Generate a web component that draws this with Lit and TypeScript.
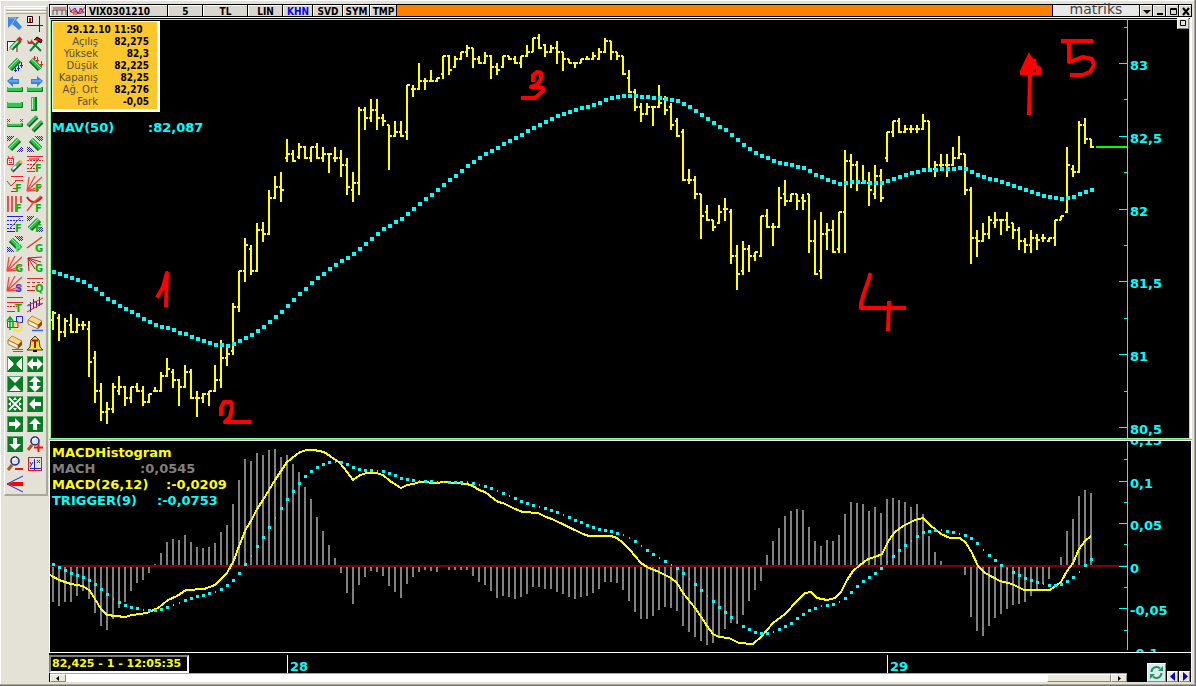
import { LitElement, html, svg, css } from "lit";
import { customElement, property } from "lit/decorators.js";

/* ---------- series: one entry per 5-minute bar, in plot units ---------- */
const STEP = 6;
const X0 = 53;

// high, low, open, close
const BARS: number[][] = `311,330,320,313 314,341,318,332 318,337,332,321 314,333,325,332 318,333,332,325 321,330,325,325
321,377,329,362 351,403,358,391 383,421,391,412 402,424,412,409 383,413,409,387 376,395,391,387 386,406,387,398 387,403,398,387
383,392,387,391 386,406,391,402 394,403,402,394 387,392,391,391 372,392,391,376 358,377,376,369 369,388,372,380 379,406,380,387
365,388,387,372 369,399,372,398 391,417,398,398 393,403,398,394 391,406,394,391 365,392,391,380 340,388,380,358 347,366,358,354
303,355,351,307 271,312,307,271 238,282,271,245 245,275,249,271 223,272,271,230 222,242,230,234 190,235,234,198 176,199,198,187
172,202,187,190 139,162,158,154 150,162,154,161 143,159,157,147 146,159,147,158 147,162,158,147 143,159,147,158 147,162,158,154
153,173,154,154 147,162,158,158 150,177,158,165 158,195,165,187 172,202,190,183 107,195,183,110 107,130,110,118 99,122,118,110
99,130,110,118 114,126,118,121 125,170,125,136 121,137,136,132 121,137,132,136 85,140,132,85 85,97,89,89 63,90,89,81
78,90,81,81 70,82,81,81 78,82,81,78 56,79,74,56 55,75,56,70 56,68,67,59 52,60,59,52 45,57,52,48 48,68,48,59 56,64,59,63
52,64,63,56 55,79,56,67 63,75,67,70 56,68,67,56 56,60,56,59 56,64,59,63 56,68,63,56 45,57,56,52 38,52,52,38 34,49,38,48
44,57,45,52 45,53,52,48 41,64,48,52 52,71,52,59 59,63,59,63 62,68,63,63 59,63,63,59 56,60,59,59 52,60,59,56 48,60,59,52
38,53,52,41 41,60,41,52 52,60,52,56 56,75,56,74 70,93,78,92 89,111,92,107 103,122,107,114 103,115,114,107 107,126,107,107
85,108,107,103 96,115,99,110 103,130,107,125 118,137,121,136 129,181,132,180 169,184,180,180 176,199,180,194 194,239,194,216
205,221,212,220 220,231,220,227 205,224,223,212 198,221,209,209 209,264,212,256 245,290,256,274 241,275,271,249 245,272,249,256
252,261,256,252 216,257,256,216 209,228,216,227 223,246,227,227 187,228,227,198 180,206,194,201 194,202,201,194 194,210,194,201
194,210,198,201 194,253,194,241 220,275,241,274 212,279,271,234 223,250,234,230 220,253,230,252 212,253,249,212 150,253,212,161
154,188,161,165 161,191,165,182 165,184,183,183 172,206,183,190 165,199,194,176 169,202,176,198 132,162,158,132 121,137,132,121
118,133,121,132 125,133,132,129 125,133,129,129 125,133,129,129 114,130,129,121 121,170,121,170 161,177,169,165 154,169,165,165
154,177,165,165 147,166,165,158 136,159,158,154 154,195,154,190 187,264,190,238 230,257,238,241 223,242,241,234 216,239,234,220
212,228,223,220 220,235,220,220 212,231,220,227 223,239,223,230 227,250,230,241 238,253,241,245 230,253,245,238 234,250,238,240
234,242,238,238 238,242,241,238 220,246,238,220 216,220,220,216 147,213,212,165 165,177,169,172 121,173,172,125 118,144,125,139
139,148,139,147`.split(/\s+/).map((r) => r.split(",").map(Number));

const MAV = [272,274,276,278,280,282,286,289,294,299,302,306,309,312,315,319,322,325,327,328,330,333,334,337,339,341,343,345,345,346,
344,341,338,335,331,327,322,317,312,306,300,294,289,283,278,274,269,265,261,258,254,249,244,239,234,
229,226,222,219,214,209,204,199,195,190,185,180,176,171,166,162,158,154,151,148,144,141,138,135,131,128,125,122,119,116,114,112,
110,108,107,105,103,100,98,97,96,96,96,97,97,98,98,99,100,101,104,107,111,115,119,123,127,130,135,140,145,149,153,156,158,161,163,
164,165,167,168,171,175,177,180,182,184,183,182,182,
182,183,183,183,181,179,177,175,173,172,170,170,170,169,169,169,168,169,172,175,177,179,180,182,184,186,188,190,192,194,196,197,198,199,198,197,194,192,190];

const HIST = [602,606,602,602,596,591,599,613,626,630,619,608,602,591,583,580,573,564,553,542,539,540,535,542,547,548,547,543,532,525,
504,480,459,461,453,455,450,449,457,455,464,472,487,499,517,531,545,558,573,593,604,585,577,571,572,576,586,592,598,584,577,572,570,571,572,
567,570,570,570,570,576,582,585,591,598,596,597,599,597,594,587,587,589,589,592,594,597,599,597,596,593,589,582,582,583,590,601,612,
619,619,616,610,607,608,611,626,632,637,641,645,643,638,629,623,624,615,601,590,581,555,541,528,516,511,509,510,527,541,546,540,541,535,
514,502,503,504,511,507,513,499,498,500,502,507,504,514,536,552,561,567,567,567,575,617,631,636,626,618,614,609,605,604,602,596,590,584,579,
567,557,531,519,496,490,493];

const MACD = "50,575 59,580 71,584 83,586 90,591 95,599 101,609 107,615 125,617 132,615 147,613 158,608 168,600 177,596 186,590 204,589 215,585 227,573 234,560 239,546 246,529 251,521 257,509 263,500 275,480 287,462 300,452 307,450 314,450 324,452 330,456 340,463 347,472 353,480 360,475 367,473 376,473 383,475 390,481 401,488 407,485 413,484 420,482 437,483 443,482 467,484 473,486 479,490 485,492 498,502 503,503 515,509 523,512 538,513 546,517 552,519 583,534 589,536 611,536 617,538 623,543 630,550 641,563 647,567 659,572 671,578 677,583 683,593 695,608 700,615 707,626 713,634 719,637 729,638 739,643 753,644 761,637 773,623 785,614 797,601 805,593 811,592 817,598 827,600 835,598 841,592 847,580 853,571 860,565 868,559 875,557 882,554 889,540 895,532 903,526 915,520 923,518 930,525 941,534 950,538 960,538 966,543 972,553 978,566 985,573 1000,581 1012,584 1024,590 1050,590 1061,582 1067,571 1073,563 1079,549 1085,541 1091,536";

const TRIGGER = [564,567,570,573,575,577,580,584,589,594,599,602,605,607,608,610,610,610,609,607,605,603,600,598,596,595,593,592,589,585,
580,573,564,556,546,537,527,518,508,499,491,483,476,471,467,464,462,462,462,464,467,469,470,470,471,471,473,475,478,479,480,481,481,481,482,482,
482,482,482,482,483,485,486,488,491,493,496,498,501,503,505,507,508,510,512,515,517,520,522,525,527,529,530,531,533,535,538,541,546,550,554,558,
561,565,568,573,579,584,590,596,601,607,612,617,622,626,629,632,633,633,632,629,626,623,618,614,610,608,606,605,604,602,598,592,586,581,577,573,
568,562,556,550,545,541,536,532,531,530,530,531,532,534,535,538,543,550,555,560,565,569,572,575,578,580,582,584,585,585,584,581,577,572,565,559];

const TRIGGER_SMALL = new Set([10,15,20,21,27,33,37,47,54,61,64,65,69,71,74,76,81,85,95,96,98,101,103,106,109,114,120,128,131,139,143,148,151,155,159,165,171]);

/* ---------- toolbar glyphs, 16 x 16 ---------- */
const fan = svg`<path d="M0 15 15 10M0 15 15 1M0 15 8 0M0 15 2 1M0 15 12 14" stroke="#f44" stroke-width="1.3"/>`;
const letter = (t: string, c = "#00b400") => svg`<text x="8" y="16" fill=${c} class="ltr">${t}</text>`;
const barUp = svg`<path d="M3 13 12 4" stroke="#046a14" stroke-width="6"/><path d="M2.500 12.500 11.500 3.500" stroke="#2ec24a" stroke-width="4"/><path d="M2 12 11 3" stroke="#a6f0ae" stroke-width="1"/>`;
const barDown = svg`<path d="M4 4 13 13" stroke="#046a14" stroke-width="6"/><path d="M4.500 3.500 13.500 12.500" stroke="#2ec24a" stroke-width="4"/><path d="M5 3 14 12" stroke="#a6f0ae" stroke-width="1"/>`;
const dotsUp = svg`<path d="M0 .5H8M0 2.500H6M0 4.500H4M10 15.500H16M12 13.500H16M14 11.500H16" stroke="#22a" stroke-dasharray="1 1"/><path d="M1 1.500H7M1 3.500H5M11 14.500H16M13 12.500H16" stroke="#22a" stroke-dasharray="1 1"/>`;
const dotsDown = svg`<path d="M8 .5H16M10 2.500H16M12 4.500H16M0 15.500H7M0 13.500H5M0 11.500H3" stroke="#22a" stroke-dasharray="1 1"/><path d="M9 1.500H16M11 3.500H16M1 14.500H6M1 12.500H4" stroke="#22a" stroke-dasharray="1 1"/>`;
const barFlat = (y: number, h = 5) => svg`<rect x="0" y=${y} width="16" height=${h} rx="1" fill="#087a1c"/><rect x="0" y=${y} width="15" height=${h - 1} rx="1" fill="#36c452"/><rect x="1" y=${y} width="13" height="1" fill="#a6f0ae"/>`;
const pencil = svg`<path d="M4 13 13 4" stroke="#0a7a30" stroke-width="5"/><path d="M4 12 12 4" stroke="#a8eeb0" stroke-width="2"/><path d="M11 5 14 2" stroke="#d22" stroke-width="4"/><path d="M1 15 3 11 6 13Z" fill="#da8"/>`;
const tile = (d: unknown) => svg`<rect width="16" height="16" rx="1" fill="#087c22"/><path d="M.5 15V.5H15" stroke="#4bb262"/>${d}`;
const eraserBody = svg`<path d="M1 4 5 0 15 5 11 9Z" fill="#fbd98a" stroke="#c98a1b"/><path d="M1 4 11 9V13L1 8Z" fill="#f5f1e8" stroke="#b5772a"/><path d="M11 9 15 5V9L11 13Z" fill="#8a4a12"/>`;
const lens = svg`<circle cx="8" cy="5" r="4" fill="#cfe4ff" stroke="#226" stroke-width="1.500"/><path d="M6 4 9 2" stroke="#fff" stroke-width="2"/><path d="M5 9 1 14" stroke="#a55a1e" stroke-width="3"/>`;

const TOOLS: [string, unknown][] = [
  ["Select", svg`<path d="M1 1H12L9 4 15 11 12 14 5 8 1 12Z" fill="#3c86e8"/><path d="M2 2H9L4 9" stroke="#8fc0ff"/>`],
  ["Crosshair", svg`<path d="M12.500 0V16M0 9.500H16" stroke="#1414c8"/><path d="M.5 .5H5.500V6.500H.5Z" stroke="#200" fill="#fff"/><path d="M3 2V6" stroke="#e00" stroke-width="2"/>`],
  ["Draw", svg`<path d="M0 5.500H10V16M.5 5V15" stroke="#900"/><rect x="1" y="6" width="8" height="9" fill="#fff"/>${pencil}`],
  ["Settings", svg`<path d="M3 15 12 5M14 15 5 6" stroke="#083" stroke-width="2"/><path d="M7 4 10 1 15 4 14 7 11 5" fill="#b11" stroke="#300"/><path d="M0 4 3 6 5 3 6 8 1 8Z" fill="#e22"/>`],
  ["Rising channel", svg`${barUp}<path d="M8.500 12V16M11.500 9V15M14.500 6V12M7 14.500H10M10 12.500H13M13 9.500H16" stroke="#22d"/>`],
  ["Falling channel", svg`${barDown}<path d="M7.500 0V4M10.500 1V6M14.500 5V11M6 2.500H9M9 4.500H12M13 8.500H16" stroke="#e22"/>`],
  ["Extend left", svg`${barFlat(11, 5)}<path d="M0 5 6 0V3H12V8H6V11Z" fill="#3584e4"/><path d="M2 5H11" stroke="#8cc4ff"/>`],
  ["Extend right", svg`${barFlat(11, 5)}<path d="M16 5 10 0V3H4V8H10V11Z" fill="#3584e4"/><path d="M5 5H14" stroke="#8cc4ff"/>`],
  ["Horizontal line", barFlat(6, 6)],
  ["Vertical line", svg`<rect x="4" y="1" width="6" height="14" fill="#087a1c"/><rect x="4" y="1" width="4" height="13" fill="#36c452"/><rect x="5" y="2" width="1" height="11" fill="#b6f5be"/>`],
  ["Segment", svg`${barFlat(7, 4)}<path d="M0 3 3 6M3 3 0 6M13 3 16 6M16 3 13 6" stroke="#e22"/>`],
  ["Parallel lines", svg`<path d="M1 10 10 1M6 15 15 6" stroke="#046a14" stroke-width="4"/><path d="M1 9 10 0M6 14 15 5" stroke="#3cc858" stroke-width="2"/>`],
  ["Up band", svg`${dotsUp}${barUp}`],
  ["Down band", svg`${dotsDown}${barDown}`],
  ["Robot", svg`<path d="M.5 2.500H6.500V8.500H.5ZM2 2 1 0M5 2 6 0M2 4.500H3M4 4.500H5M2 6.500H5" stroke="#e22"/><path d="M5 15 14 6" stroke="#445" stroke-width="4"/><path d="M5 14 13 6" stroke="#4ccf5c" stroke-width="2"/><path d="M6 13 9 10" stroke="#dff" stroke-width="2"/><path d="M13 7 15 5" stroke="#fb3" stroke-width="3"/>`],
  ["Fibonacci zigzag", svg`<path d="M0 .5H16M0 15.500H8" stroke="#e22"/><path d="M0 4.500H16M0 8.500H8M0 12.500H8" stroke="#e22" stroke-dasharray="2 1"/><path d="M2 3H12L4 12" stroke="#c11"/>${letter("F")}`],
  ["Fibonacci levels", svg`<path d="M4 .5H16M8 4.500H16M6 12.500H9M4 15.500H9M0 5 4 10 10 4" stroke="#e22"/>${letter("F")}`],
  ["Fibonacci fan", svg`${fan}${letter("F")}`],
  ["Fibonacci time", svg`<path d="M1 0V16M5 0V16M9 0V16M14 0V7" stroke="#e22" stroke-width="1.500"/>${letter("F")}`],
  ["Fibonacci arc", svg`<path d="M0 1Q6 11 15 1" stroke="#d11" stroke-width="2"/><path d="M14 0 6 7 0 15" stroke="#f44" stroke-width="1.500"/>${letter("F")}`],
  ["Fibonacci extension", svg`<path d="M0 .5H16M0 15.500H8" stroke="#22d"/><path d="M0 4.500H16M0 8.500H8M0 12.500H8" stroke="#22d" stroke-dasharray="2 1"/><path d="M13 2 3 12" stroke="#e22"/>${letter("F")}`],
  ["Fibonacci up band", svg`${dotsUp}${barUp}${letter("F")}`],
  ["Fibonacci down band", svg`${dotsDown}${barDown}${letter("F", "#4fe070")}`],
  ["Gann line", svg`<path d="M0 12 15 1" stroke="#e33" stroke-width="1.500"/>${letter("G")}`],
  ["Gann fan", svg`${fan}${letter("G")}`],
  ["Gann rays", svg`<path d="M1 2 15 1M1 2 14 6M1 2 8 13M1 2 2 15M1 2 11 9" stroke="#c11"/>${letter("G")}`],
  ["Speed fan", svg`${fan}${letter("S", "#34d")}`],
  ["Quadrant lines", svg`<path d="M0 2.500H16M0 14.500H8" stroke="#e22"/><path d="M0 6.500H16M0 10.500H8" stroke="#e22" stroke-dasharray="3 2"/>${letter("Q")}`],
  ["Tirone levels", svg`<path d="M0 1.500H16M0 6.500H16M0 15.500H8" stroke="#e22"/><path d="M0 10.500H10" stroke="#e22" stroke-dasharray="2 1"/>${letter("T")}`],
  ["Regression", svg`<path d="M3.500 6V16M6.500 3V13M9.500 5V12M12.500 1V10M1 9H4M7 6H9M10 8H15" stroke="#22b"/><path d="M0 10 16 2M0 16 16 7" stroke="#e22"/>`],
  ["Shapes", svg`<path d="M9.500 .5H15.500V6.500H9.500Z" stroke="#22e"/><circle cx="11" cy="11" r="4" stroke="#fd2" stroke-width="1.500"/><path d="M.5 5.500H11V11.500H.5Z" stroke="#e11"/><path d="M3 14V2M0 5 3 1 6 5M6 12V5" stroke="#0a2" stroke-width="1.500"/>`],
  ["Erase", svg`${eraserBody}<path d="M5 14.500H16" stroke="#36f" stroke-width="1.500"/>`],
  ["Erase all", svg`${eraserBody}<path d="M5 13.500H16M6 15.500H16" stroke="#36f"/>`],
  ["Alarm", svg`<path d="M8 0 10 2 12 4 13 11 16 14H0L3 11 4 4 6 2Z" fill="#f4e23c" stroke="#431"/><path d="M6 15H10" stroke="#300" stroke-width="2"/><path d="M5 4.500H11M8 4V12" stroke="#b11" stroke-width="2"/>`],
  ["Narrow", tile(svg`<path d="M1 2 7 8 1 14ZM15 2 9 8 15 14Z" fill="#fff"/><path d="M1 2 6 7M15 2 10 7M1 14 6 9M15 14 10 9" stroke="#dfd"/>`)],
  ["Widen", tile(svg`<path d="M0 8 6 2V6H10V2L16 8 10 14V10H6V14Z" fill="#fff"/>`)],
  ["Flatten", tile(svg`<path d="M2 1H14L8 7ZM2 15H14L8 9Z" fill="#fff"/>`)],
  ["Heighten", tile(svg`<path d="M8 0 14 6H10V10H14L8 16 2 10H6V6H2Z" fill="#fff"/>`)],
  ["Fit", tile(svg`<path d="M2 2 14 14M14 2 2 14" stroke="#fff" stroke-width="2"/><path d="M8 1 10 4H6ZM8 15 10 12H6ZM1 8 4 6V10ZM15 8 12 6V10Z" fill="#fff"/>`)],
  ["Left", tile(svg`<path d="M2 8 8 2V6H14V10H8V14Z" fill="#fff"/>`)],
  ["Right", tile(svg`<path d="M14 8 8 2V6H2V10H8V14Z" fill="#fff"/>`)],
  ["Up", tile(svg`<path d="M8 2 14 8H10V14H6V8H2Z" fill="#fff"/>`)],
  ["Down", tile(svg`<path d="M8 14 14 8H10V2H6V8H2Z" fill="#fff"/>`)],
  ["Zoom in", svg`${lens}<path d="M11.500 7V16M7 11.500H16" stroke="#e11" stroke-width="2"/>`],
  ["Zoom out", svg`${lens}<path d="M8 13H16" stroke="#e11" stroke-width="2"/>`],
  ["Axes", svg`<rect x="1.500" y="1.500" width="13" height="13" stroke="#e11"/><path d="M7.500 3V14M3 12.500H14M3 6 4.500 9M6 6 3 11M10 4 13 7M13 4 10 7" stroke="#22c"/>`],
  ["Wedge", svg`<path d="M0 8 16 0M0 8 16 16" stroke="#22d"/><path d="M0 8 6 6H16V10H6Z" fill="#f00"/>`],
];

@customElement("tool-bar")
class ToolBar extends LitElement {
  static styles = css`
    :host { display: block; }
    .box { margin: 6px 1px 0 4px; padding: 1px 0 0 1px; border-top: 1px solid #fff; border-left: 1px solid #fff; border-right: 2px solid #aca899; border-bottom: 2px solid #aca899; }
    .grip { height: 1px; border-top: 1px solid #fff; border-bottom: 1px solid #aca899; }
    .grid { display: grid; grid-template-columns: 20px 20px; grid-auto-rows: 20px; }
    button { padding: 2px 0 2px 1px; margin: 0; border: 0; background: none; display: block; height: 20px; }
    svg { display: block; width: 16px; height: 16px; overflow: visible; }
    .ltr { font: bold 11px "DejaVu Sans Condensed", "DejaVu Sans", sans-serif; stroke: none; }
  `;
  render() {
    return html`<div class="box">
      <div class="grip"></div><div class="grip"></div>
      <div class="grid">
        ${TOOLS.map(([name, g]) => html`<button aria-label=${name}><svg viewBox="0 0 16 16" fill="none">${g}</svg></button>`)}
      </div>
    </div>`;
  }
}

@customElement("title-bar")
class TitleBar extends LitElement {
  static styles = css`
    :host { display: flex; gap: 1px; height: 11px; padding: 1px; background: #000; font: bold 10px/11px "DejaVu Sans Condensed", "DejaVu Sans", sans-serif; }
    button { flex: none; box-sizing: border-box; height: 11px; padding: 0; border: 0; border-top: 1px solid #fff; border-left: 1px solid #fff; background: #d8d6ce; color: #000; font: inherit; text-align: center; display: block; line-height: 11px; }
    svg { display: block; margin: auto; }
    .i { width: 17px; }
    .sym { width: 81px; text-align: left; padding-left: 2px; }
    .w34 { width: 34px; }
    .w44 { width: 44px; }
    .w29 { width: 29px; }
    .w26 { width: 26px; }
    .blue { color: #00f; }
    .fill { flex: 1; background: #ff8000; }
    .brand { width: 86px; background: #e8e8e8; color: #444; font: 14px/9px "DejaVu Sans", sans-serif; text-align: center; box-sizing: border-box; height: 11px; }
    .w12 { width: 12px; }
  `;
  render() {
    return html`
      <button class="i" aria-label="Chart type"><svg width="15" height="9" viewBox="0 0 15 9" fill="none" stroke="#555"><path d="M1 8V3H14V8M5 8V3M10 8V3"/><path d="M1 1H14" stroke="#a44"/></svg></button>
      <button class="i" aria-label="Indicators"><svg width="16" height="10" viewBox="0 0 16 10" fill="none"><path d="M0 1 3 7 7 5 11 8 16 1" stroke="#e22"/><path d="M1 6 6 2 9 8 12 2 15 7" stroke="#22c"/><path d="M5 3V9M7 4V9M11 2V8M13 3V8" stroke="#e22"/></svg></button>
      <button class="sym">VIX0301210</button>
      <button class="w34">5</button>
      <button class="w44">TL</button>
      <button class="w34">LIN</button>
      <button class="w29 blue">KHN</button>
      <button class="w29">SVD</button>
      <button class="w26">SYM</button>
      <button class="w26">TMP</button>
      <div class="fill"></div>
      <div class="brand">matriks</div>
      <button class="w12" aria-label="Menu"><svg width="10" height="9"><path d="M1 3H9L5 7Z"/></svg></button>
      <button class="w12" aria-label="Minimize"><svg width="10" height="9"><path d="M2 6H8V8H2Z"/></svg></button>
      <button class="w12" aria-label="Maximize"><svg width="10" height="9"><path d="M2.500 1.500H8.500V7.500H2.500ZM2 2.500H9" fill="none" stroke="#000"/></svg></button>
      <button class="w12" aria-label="Close"><svg width="10" height="9"><path d="M2 1 8 8M8 1 2 8" stroke="#000" stroke-width="2"/></svg></button>`;
  }
}

@customElement("quote-card")
class QuoteCard extends LitElement {
  static styles = css`
    :host { display: block; box-sizing: border-box; width: 108px; padding: 2px 8px 1px 3px; border: 1px solid #fff; border-right-width: 3px; border-bottom-width: 3px; background: #fcc62d; color: #000; font: bold 10px/12px "DejaVu Sans Condensed", "DejaVu Sans", sans-serif; }
    .time { text-align: center; padding-left: 4px; }
    dl { margin: 0; display: grid; grid-template-columns: 42px 1fr; }
    dt { font-family: "DejaVu Sans", sans-serif; font-weight: normal; color: #55503c; text-align: right; }
    dd { margin: 0; text-align: right; }
  `;
  render() {
    const rows = [["Açılış", "82,275"], ["Yüksek", "82,3"], ["Düşük", "82,225"], ["Kapanış", "82,25"], ["Ağ. Ort", "82,276"], ["Fark", "-0,05"]];
    return html`<div class="time">29.12.10 11:50</div><dl>${rows.map(([k, v]) => html`<dt>${k}</dt><dd>${v}</dd>`)}</dl>`;
  }
}

const axisStyles = css`
  :host { display: block; position: relative; min-height: 0; }
  svg { display: block; width: 100%; height: 100%; }
  .lbl { font: bold 13px "DejaVu Sans", Verdana, sans-serif; fill: #0ff; stroke: none; }
  .legend { position: absolute; left: 1px; font: bold 13px/16px "DejaVu Sans", Verdana, sans-serif; white-space: nowrap; }
  .row { display: flex; }
  .cyan { color: #0ff; }
  .gray { color: #808080; }
  .yellow { color: #ff0; }
`;

@customElement("price-chart")
class PriceChart extends LitElement {
  static styles = [axisStyles, css`
    .legend { top: 100px; }
    .name { width: 96px; }
    quote-card { position: absolute; left: 1px; top: 1px; }
    .restore { position: absolute; right: 0; top: -2px; width: 12px; height: 11px; padding: 0; border: 1px solid #888; border-top-color: #fff; border-left-color: #fff; background: #e4e2d8; }
    .restore svg { width: 10px; height: 9px; }
  `];
  render() {
    const major: [number, string][] = [[63, "83"], [136, "82,5"], [209, "82"], [281, "81,5"], [354, "81"], [427, "80,5"]];
    const minor = [27, 99, 172, 245, 318, 391];
    const bars = BARS.map(([h, l, o, c], i) => {
      const x = X0 + i * STEP;
      return `M${x} ${h}V${l}M${x - 2} ${o}H${x}M${x} ${c}H${x + 3}`;
    }).join("");
    const ticks = major.map(([y]) => `M1119 ${y + .5}H1127`).join("") + minor.map((y) => `M1124 ${y + .5}H1127`).join("");
    return html`
      <svg viewBox="51 20 1138 418" fill="none" role="img" aria-label="VIX0301210 price chart">
        <g shape-rendering="crispEdges">
          <path d=${bars} stroke="#ff0" stroke-width="2"/>
          ${MAV.map((y, i) => svg`<rect x=${X0 - 1 + i * STEP} y=${y - 2} width="4" height="4" fill="#0ff"/>`)}
          <path d="M1127.500 20V438${ticks}" stroke="#0ff"/>
          <path d="M1096 147H1127" stroke="#0f0" stroke-width="2"/>
        </g>
        ${major.map(([y, t]) => svg`<text class="lbl" x="1130" y=${y + 7}>${t}</text>`)}
        <g stroke="#f00" stroke-width="4" stroke-linejoin="round" stroke-linecap="square">
          <path d="M158 296 163 287 167 273 166 305"/>
          <path d="M221 414V408L224 402 231 402 232 408 230 417 225 422H249"/>
          <path d="M533 80V75L537 72 541 73V79L537 85 531 87 543 88V91L535 98H523"/>
          <path d="M870 275 868 282 865 290 861 303V308H904M889 303 888 329"/>
          <path d="M1091 41H1063M1069 43V62L1083 57 1092 59 1094 65 1090 72 1082 75H1072"/>
          <path d="M1030 75 1029 113"/>
        </g>
        <path d="M1029 52 1032 58 1036 59 1037 65 1041 67V75H1020V71L1025 60Z" fill="#f00"/>
        <rect x="1033" y="70" width="3" height="2" fill="#000"/>
      </svg>
      <quote-card></quote-card>
      <div class="legend cyan"><div class="row"><span class="name">MAV(50)</span><span>:82,087</span></div></div>
      <button class="restore" aria-label="Restore"><svg viewBox="0 0 10 9"><path d="M2.500 1.500H7.500V6.500H2.500Z" fill="none" stroke="#000"/></svg></button>`;
  }
}

@customElement("macd-chart")
class MacdChart extends LitElement {
  static styles = [axisStyles, css`
    .legend { top: 4px; left: 2px; }
    .n1 { width: 88px; }
    .n2 { width: 114px; }
    .n3 { width: 105px; }
  `];
  render() {
    const major: [number, string][] = [[438, "0,15"], [481, "0,1"], [523, "0,05"], [566, "0"], [608, "-0,05"], [651, "-0,1"]];
    const minor = [459, 502, 544, 587, 630];
    const hist = HIST.map((y, i) => `M${X0 + i * STEP} 566V${y}`).join("");
    const ticks = major.slice(1, 5).map(([y]) => `M1119 ${y + .5}H1127`).join("") + minor.map((y) => `M1124 ${y + .5}H1127`).join("");
    return html`
      <svg viewBox="50 441 1140 211" fill="none" role="img" aria-label="MACD histogram chart">
        <g shape-rendering="crispEdges">
          <path d=${hist} stroke="#808080" stroke-width="2"/>
          <path d="M50 566H1127" stroke="#800000" stroke-width="2"/>
          <polyline points=${MACD} stroke="#ff0" stroke-width="2"/>
          ${TRIGGER.map((y, i) => TRIGGER_SMALL.has(i)
            ? svg`<rect x=${X0 + i * STEP} y=${y - 1} width="1" height="2" fill="#0ff"/>`
            : svg`<rect x=${X0 - 1 + i * STEP} y=${y - 1} width="3" height="3" fill="#0ff"/>`)}
          <path d="M1127.500 442V650${ticks}" stroke="#0ff"/>
        </g>
        ${major.map(([y, t]) => svg`<text class="lbl" x="1130" y=${y + 7}>${t}</text>`)}
      </svg>
      <div class="legend">
        <div class="row yellow">MACDHistogram</div>
        <div class="row gray"><span class="n1">MACH</span><span>:0,0545</span></div>
        <div class="row yellow"><span class="n2">MACD(26,12)</span><span>:-0,0209</span></div>
        <div class="row cyan"><span class="n3">TRIGGER(9)</span><span>:-0,0753</span></div>
      </div>`;
  }
}

@customElement("app-root")
class AppRoot extends LitElement {
  @property({ type: String }) status = "82,425 - 1 - 12:05:35";
  static styles = css`
    :host { display: grid; grid-template-columns: 49px minmax(0, 1fr); box-sizing: border-box; height: 100vh; padding: 0 4px 4px 0; background: #e4e2d6; box-shadow: inset -1px -1px #716f64, inset -2px -2px #aca899, inset 1px 1px #fff; overflow: hidden; }
    .win { display: flex; flex-direction: column; min-width: 0; padding-top: 4px; }
    .top { flex: 420 1 0; min-height: 0; display: flex; padding-top: 1px; background: #000; border-top: 1px solid #fff; border-right: 2px solid #fff; border-left: 1px solid #fff; }
    price-chart { flex: 1; border: 1px solid #80ff80; }
    .bottom { flex: 211 1 0; min-height: 0; display: flex; background: #000; border: 1px solid #fff; padding-right: 1px; }
    macd-chart { flex: 1; }
    .gap { height: 1px; background: #aca899; }
    .foot { display: grid; grid-template-columns: minmax(0, 1fr) 64px; background: #000; border-right: 1px solid #fff; }
    .time { display: grid; grid-template-columns: 238fr 600fr 240fr; height: 20px; }
    .slot { color: #0ff; font: bold 13px/16px "DejaVu Sans", Verdana, sans-serif; }
    .day { border-left: 1px solid #fff; margin-top: 2px; padding-left: 2px; height: 18px; line-height: 24px; }
    .status { box-sizing: border-box; width: 140px; height: 18px; margin-top: 2px; padding-left: 1px; border: 2px solid #808080; border-right-color: #fff; border-bottom-color: #fff; color: #ff0; font: bold 11px/14px "DejaVu Sans", Verdana, sans-serif; white-space: nowrap; }
    .scroll { display: flex; height: 9px; margin-left: 1px; background: #fff; border-top: 1px solid #aca899; box-sizing: border-box; }
    .scroll button, .thumb, .nav button { box-sizing: border-box; padding: 0; border: 1px solid #8c8a80; border-top-color: #fff; border-left-color: #fff; background: #ece9d8; display: block; }
    .scroll button { width: 16px; }
    .thumb { width: 64px; }
    .rail { flex: 1; }
    .scroll svg, .nav svg { display: block; margin: auto; }
    .nav { display: flex; align-items: flex-end; gap: 1px; padding-left: 20px; }
    .nav button { width: 11px; height: 11px; }
    .nav .sync { width: 19px; height: 19px; }
  `;
  render() {
    return html`
      <tool-bar></tool-bar>
      <main class="win">
        <title-bar></title-bar>
        <section class="top"><price-chart></price-chart></section>
        <div class="gap"></div>
        <section class="bottom"><macd-chart></macd-chart></section>
        <footer class="foot">
          <div>
            <div class="time">
              <div class="slot"><div class="status">${this.status}</div></div>
              <div class="slot"><div class="day">28</div></div>
              <div class="slot"><div class="day">29</div></div>
            </div>
            <div class="scroll">
              <button aria-label="Scroll left"><svg width="6" height="5"><path d="M4 0V5L1 2.500Z"/></svg></button>
              <div class="rail"></div><div class="thumb"></div>
              <button aria-label="Scroll right"><svg width="6" height="5"><path d="M2 0V5L5 2.500Z"/></svg></button>
            </div>
          </div>
          <div class="nav">
            <button class="sync" aria-label="Refresh"><svg width="17" height="17" viewBox="0 0 17 17" fill="none"><rect width="17" height="17" fill="#dce8f8"/><path d="M3.500 8A5 5 0 0 1 12 4.500M13.500 9A5 5 0 0 1 5 12.500" stroke="#1d9a4a" stroke-width="2"/><path d="M10 7H15V2ZM7 10H2V15Z" fill="#1d9a4a"/></svg></button>
            <button aria-label="Previous"><svg width="8" height="9"><path d="M6 0V9L1 4.500Z" fill="#00c"/></svg></button>
            <button aria-label="Next"><svg width="8" height="9"><path d="M2 0V9L7 4.500Z" fill="#00c"/></svg></button>
          </div>
        </footer>
      </main>`;
  }
}
